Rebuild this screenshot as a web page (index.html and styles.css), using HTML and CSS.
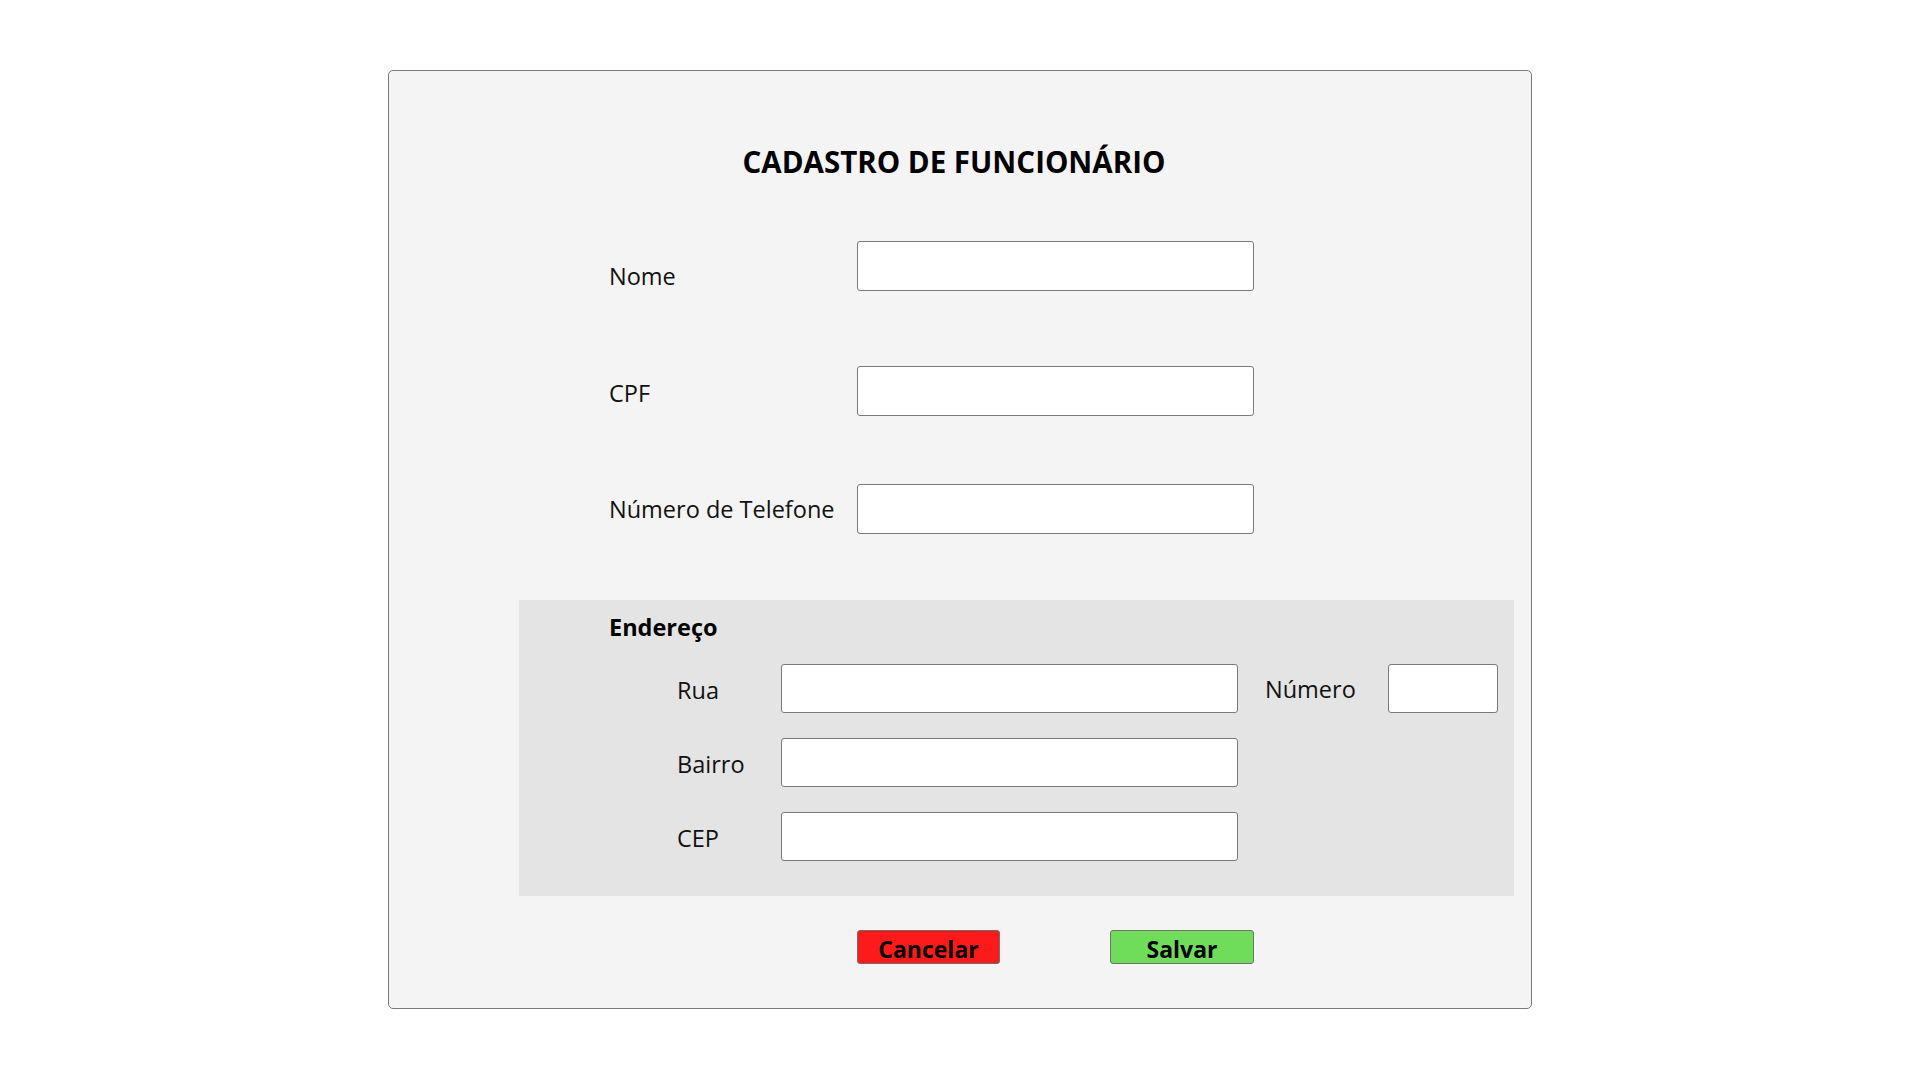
FILE: index.html
```html
<!DOCTYPE html>
<html lang="pt-BR">
<head>
<meta charset="utf-8">
<title>Cadastro de Funcionário</title>
<link rel="stylesheet" href="styles.css">
</head>
<body>
<div class="page">
  <main class="card">
    <h1 class="title">CADASTRO DE FUNCIONÁRIO</h1>

    <div class="row row-nome">
      <label class="label">Nome</label>
      <input class="field field-main" type="text">
    </div>
    <div class="row row-cpf">
      <label class="label">CPF</label>
      <input class="field field-main" type="text">
    </div>
    <div class="row row-tel">
      <label class="label">Número de Telefone</label>
      <input class="field field-main" type="text">
    </div>

    <section class="address">
      <h2 class="address-title">Endereço</h2>
      <div class="addr-row">
        <label class="label addr-label">Rua</label>
        <input class="field field-addr" type="text">
        <label class="label num-label">Número</label>
        <input class="field field-num" type="text">
      </div>
      <div class="addr-row">
        <label class="label addr-label">Bairro</label>
        <input class="field field-addr" type="text">
      </div>
      <div class="addr-row">
        <label class="label addr-label">CEP</label>
        <input class="field field-addr" type="text">
      </div>
    </section>

    <div class="actions">
      <button class="btn btn-cancel" type="button">Cancelar</button>
      <button class="btn btn-save" type="button">Salvar</button>
    </div>
  </main>
</div>
</body>
</html>
```

FILE: styles.css
```css
* { box-sizing: border-box; }

html, body {
  margin: 0;
  padding: 0;
  background: #ffffff;
}

body {
  font-family: "Open Sans", "Noto Sans", "Liberation Sans", sans-serif;
  color: #111111;
}

.page {
  padding-top: 70px;
  display: flex;
  justify-content: center;
}

.card {
  width: 1144px;
  height: 939px;
  background: #f4f4f4;
  border: 1px solid #7a7a7a;
  border-radius: 5px;
  display: flex;
  flex-direction: column;
}

.title {
  margin: 73px 12px 0 0;
  font-size: 29.5px;
  line-height: 36px;
  font-weight: 700;
  text-align: center;
  color: #000000;
}

.row {
  display: flex;
  align-items: flex-start;
  padding-left: 220px;
}

.row-nome { margin-top: 61px; }
.row-cpf { margin-top: 75px; }
.row-tel { margin-top: 68px; }

.label {
  font-size: 23.5px;
  line-height: 30px;
  white-space: nowrap;
}

.row .label { width: 248px; }
.row-nome .label { margin-top: 20px; }
.row-cpf .label { margin-top: 12px; }
.row-tel .label { margin-top: 10px; }

.field {
  display: block;
  margin: 0;
  padding: 0 6px;
  background: #ffffff;
  border: 1px solid #7a7a7a;
  border-radius: 3px;
  font: inherit;
  outline: none;
}

.field-main {
  width: 397px;
  height: 50px;
}

.address {
  margin: 66px 17px 0 130px;
  height: 296px;
  background: #e4e4e4;
  padding: 12px 0 0 90px;
}

.address-title {
  margin: 0;
  font-size: 23.5px;
  line-height: 30px;
  font-weight: 700;
  color: #000000;
}

.addr-row {
  display: flex;
  align-items: flex-start;
  padding-left: 68px;
  margin-top: 25px;
}

.address-title + .addr-row { margin-top: 22px; }

.addr-label {
  width: 104px;
  margin-top: 11px;
}

.field-addr {
  width: 457px;
  height: 49px;
}

.num-label {
  width: 150px;
  margin-top: 10px;
  padding-left: 27px;
}

.field-num {
  width: 110px;
  height: 49px;
}

.actions {
  display: flex;
  gap: 110px;
  margin-top: 34px;
  padding-left: 468px;
}

.btn {
  height: 34px;
  width: 143px;
  padding: 3px 0 0;
  border: 1px solid #707070;
  border-radius: 3px;
  font-family: inherit;
  font-size: 23px;
  line-height: 30px;
  font-weight: 700;
  color: #000000;
  cursor: pointer;
}

.btn-cancel { background: #fd1a1a; }
.btn-save { background: #70dd5a; width: 144px; }
```
